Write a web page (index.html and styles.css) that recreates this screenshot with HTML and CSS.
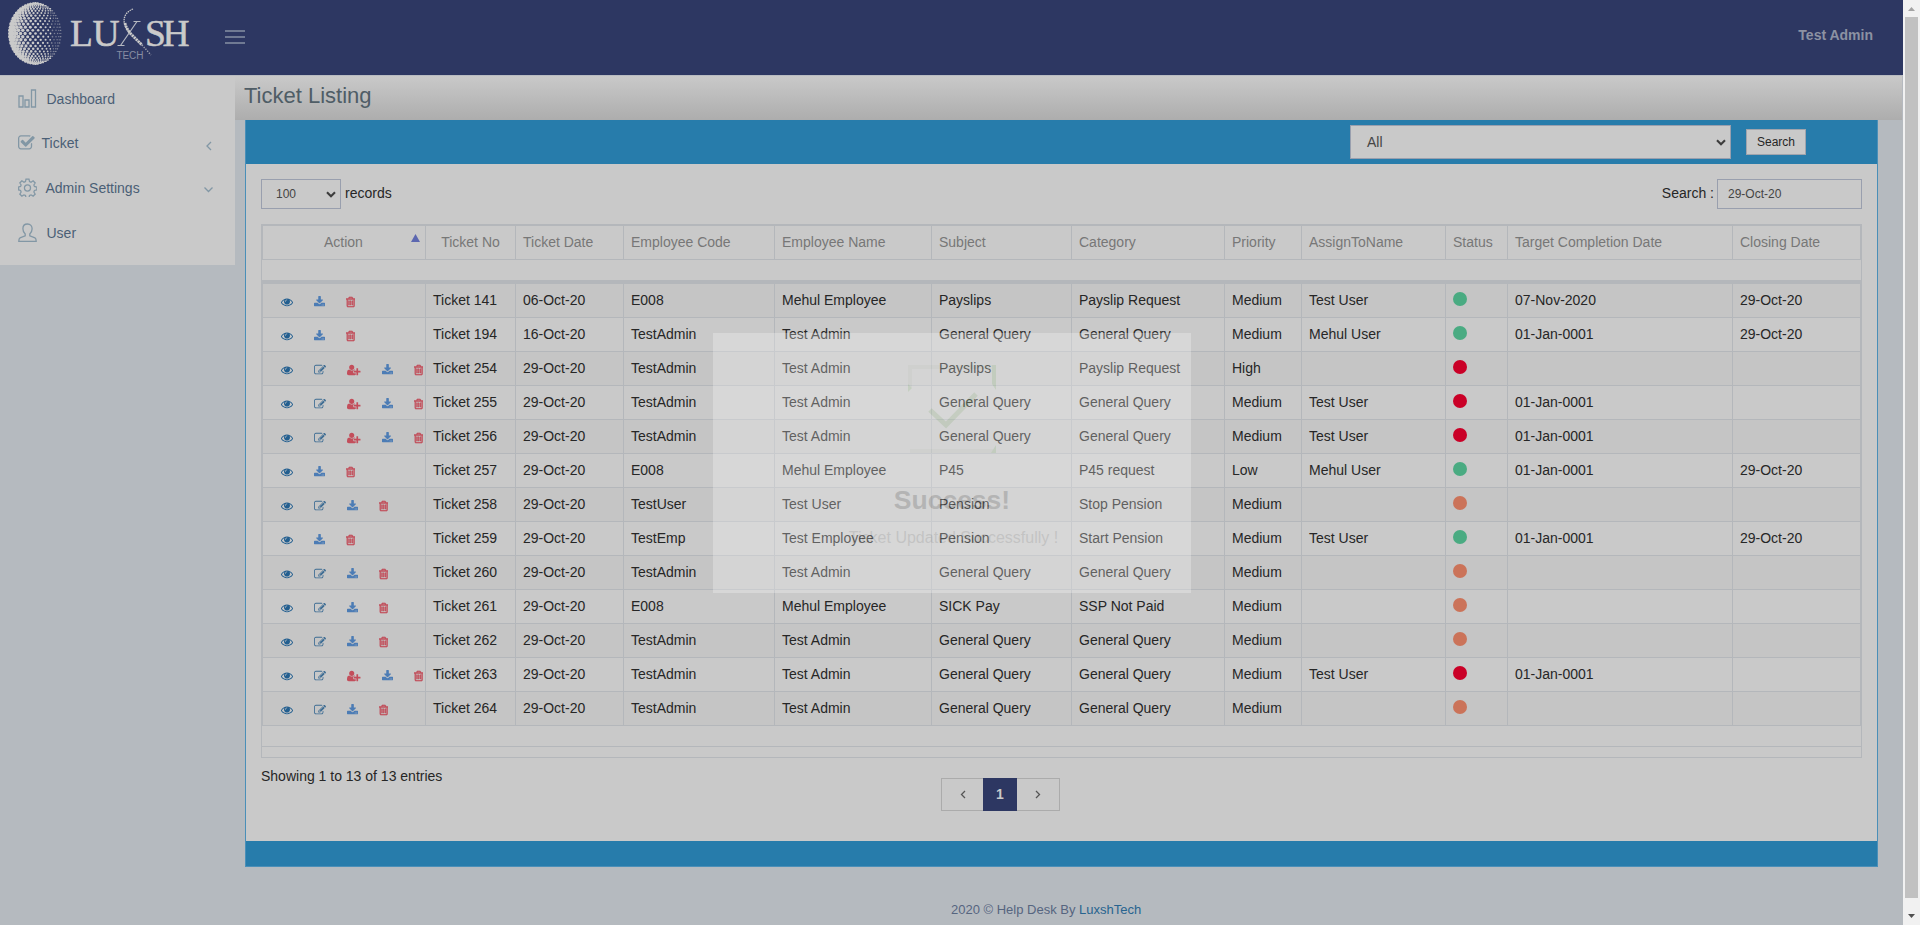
FILE: index.html
```html
<!DOCTYPE html>
<html lang="en">
<head>
<meta charset="utf-8">
<title>Ticket Listing</title>
<link rel="stylesheet" href="styles.css">
</head>
<body>
<svg class="defs" width="0" height="0">
  <symbol id="eye" viewBox="0 0 1792 1792"><path d="M1664 960q-152-236-381-353 61 104 61 225 0 185-131.5 316.5t-316.5 131.5-316.5-131.5-131.5-316.5q0-121 61-225-229 117-381 353 133 205 333.5 326.5t434.5 121.5 434.5-121.5 333.5-326.5zm-720-384q0-20-14-34t-34-14q-125 0-214.5 89.5t-89.5 214.5q0 20 14 34t34 14 34-14 14-34q0-86 61-147t147-61q20 0 34-14t14-34zm848 384q0 34-20 69-140 230-376.5 368.5t-499.5 138.5-499.5-139-376.5-368q-20-35-20-69t20-69q140-229 376.5-368t499.5-139 499.5 139 376.5 368q20 35 20 69z"/></symbol>
  <symbol id="edit" viewBox="0 0 1792 1792"><path d="M888 1184l116-116-152-152-116 116v56h96v96h56zm440-720q-16-16-33 1l-350 350q-17 17-1 33t33-1l350-350q17-17 1-33zm80 594v190q0 119-84.5 203.5t-203.5 84.5h-832q-119 0-203.5-84.5t-84.5-203.5v-832q0-119 84.5-203.5t203.5-84.5h832q63 0 117 25 15 7 18 23 3 17-9 29l-49 49q-14 14-32 8-23-6-45-6h-832q-66 0-113 47t-47 113v832q0 66 47 113t113 47h832q66 0 113-47t47-113v-126q0-13 9-22l64-64q15-15 35-7t20 29zm-96-738l288 288-672 672h-288v-288zm444 132l-92 92-288-288 92-92q28-28 68-28t68 28l152 152q28 28 28 68t-28 68z"/></symbol>
  <symbol id="assign" viewBox="0 0 2048 1792"><path d="M704 896q-159 0-271.5-112.5t-112.5-271.5 112.5-271.5 271.5-112.5 271.5 112.5 112.5 271.5-112.5 271.5-271.5 112.5zm960 128h352q13 0 22.5 9.5t9.5 22.5v192q0 13-9.5 22.5t-22.5 9.5h-352v352q0 13-9.5 22.5t-22.5 9.5h-192q-13 0-22.5-9.5t-9.5-22.5v-352h-352q-13 0-22.5-9.5t-9.5-22.5v-192q0-13 9.5-22.5t22.5-9.5h352v-352q0-13 9.5-22.5t22.5-9.5h192q13 0 22.5 9.5t9.5 22.5v352zm-736 224q0 52 38 90t90 38h256v238q-68 50-171 50h-874q-121 0-194-69t-73-190q0-53 3.5-103.5t14-109 26.5-108.5 43-97.5 62-81 85.5-53.5 111.5-20q19 0 39 17 79 61 154.5 91.5t164.5 30.5 164.5-30.5 154.5-91.5q20-17 39-17 132 0 217 96h-223q-52 0-90 38t-38 90v192z"/></symbol>
  <symbol id="download" viewBox="64 0 1664 1792"><path d="M1344 1344q0-26-19-45t-45-19-45 19-19 45 19 45 45 19 45-19 19-45zm256 0q0-26-19-45t-45-19-45 19-19 45 19 45 45 19 45-19 19-45zm128-224v320q0 40-28 68t-68 28h-1472q-40 0-68-28t-28-68v-320q0-40 28-68t68-28h465l135 136q58 56 136 56t136-56l136-136h464q40 0 68 28t28 68zm-325-569q17 41-14 70l-448 448q-18 19-45 19t-45-19l-448-448q-31-29-14-70 17-39 59-39h256v-448q0-26 19-45t45-19h256q26 0 45 19t19 45v448h256q42 0 59 39z"/></symbol>
  <symbol id="trash" viewBox="192 0 1408 1792"><path d="M704 736v576q0 14-9 23t-23 9h-64q-14 0-23-9t-9-23v-576q0-14 9-23t23-9h64q14 0 23 9t9 23zm256 0v576q0 14-9 23t-23 9h-64q-14 0-23-9t-9-23v-576q0-14 9-23t23-9h64q14 0 23 9t9 23zm256 0v576q0 14-9 23t-23 9h-64q-14 0-23-9t-9-23v-576q0-14 9-23t23-9h64q14 0 23 9t9 23zm128 724v-948h-896v948q0 22 7 40.5t14.5 27 10.5 8.5h832q3 0 10.5-8.5t14.5-27 7-40.5zm-672-1076h448l-48-117q-7-9-17-11h-317q-10 2-17 11zm928 32v64q0 14-9 23t-23 9h-96v948q0 83-47 143.5t-113 60.5h-832q-66 0-113-58.5t-47-141.5v-952h-96q-14 0-23-9t-9-23v-64q0-14 9-23t23-9h309l70-167q15-37 54-63t79-26h320q40 0 79 26t54 63l70 167h309q14 0 23 9t9 23z"/></symbol>
  <symbol id="caret" viewBox="0 0 10 7"><path d="M1 1.2 5 5.2 9 1.2" fill="none" stroke="#3c3c3c" stroke-width="2.1"/></symbol>
</svg>

<div class="app">
  <div class="page">
    <header class="topbar">
      <svg class="logo" width="200" height="75" viewBox="0 0 200 75">
        <g id="globe"></g>
        <g class="wordmark">
          <text y="45.700" x="70 92.500">LU</text>
          <path class="thin" d="M137 21.500 120.500 45.500M133.500 21.500h7M117.500 45.500h7"/>
          <text y="45.700" x="145 162.500">SH</text>
        </g>
        <path class="swoosh-line" d="M133 9C123 13 122 22 127 29L130 33"/>
        <path class="swoosh" d="M125 23Q126 28 130 33L142 45"/>
        <path class="swoosh-tail" d="M142 45 151 55"/>
        <text class="tech" x="116.500" y="59" textLength="27">TECH</text>
      </svg>
      <div class="burger"><i></i><i></i><i></i></div>
      <div class="account">Test Admin</div>
    </header>

    <div class="body">
      <nav class="sidebar">
        <div class="item">
          <svg width="19" height="20" viewBox="0 0 19 20"><path d="M1 7h4v11H1zM7 11h4v7H7zM13.500 1h4v17h-4z"/></svg><span>Dashboard</span>
        </div>
        <div class="item tight">
          <svg class="solid" width="18" height="18" viewBox="64 0 1792 1792"><path d="M1472 930v318q0 119-84.500 203.500t-203.500 84.500h-832q-119 0-203.500-84.500t-84.500-203.500v-832q0-119 84.500-203.500t203.500-84.500h832q63 0 117 25 15 7 18 23 3 17-9 29l-49 49q-10 10-23 10-3 0-9-2-23-6-45-6h-832q-66 0-113 47t-47 113v832q0 66 47 113t113 47h832q66 0 113-47t47-113v-254q0-13 9-22l64-64q10-10 23-10 6 0 12 3 20 8 20 29zm231-489l-814 814q-24 24-57 24t-57-24l-430-430q-24-24-24-57t24-57l110-110q24-24 57-24t57 24l263 263 647-647q24-24 57-24t57 24l110 110q24 24 24 57t-24 57z"/></svg><span>Ticket</span>
          <svg class="arrow" width="8" height="10" viewBox="0 0 8 10"><path d="M6 1 2 5l4 4"/></svg>
        </div>
        <div class="item gear">
          <svg width="19" height="19" viewBox="0 0 20 20"><path d="M8.400 1.200h3.200l.5 2.500 1.600.7 2.200-1.400 2.200 2.200-1.400 2.200.6 1.500 2.500.6v3.100l-2.500.5-.6 1.600 1.400 2.200-2.200 2.200-2.200-1.400-1.600.6-.5 2.500H8.400l-.5-2.500-1.600-.6-2.200 1.400-2.200-2.200 1.400-2.200-.6-1.600L.7 12.600V9.500l2-.6.6-1.500-1.400-2.200L4.100 3l2.200 1.400 1.600-.7z"/><circle cx="10" cy="10.500" r="3.200"/></svg><span>Admin Settings</span>
          <svg class="arrow" width="11" height="8" viewBox="0 0 11 8"><path d="M1.500 1.500l4 4 4-4"/></svg>
        </div>
        <div class="item">
          <svg width="19" height="20" viewBox="0 0 19 20"><path d="M9.500 1c-3 0-4.600 2-4.600 4.700 0 2.400.9 4 2.300 5.200v1.900L2 14.900c-1 .5-1.200 1.200-1.200 3.400h17.400c0-2.200-.2-2.900-1.200-3.400l-5.200-2.100v-1.900c1.400-1.200 2.300-2.800 2.300-5.200C14.100 3 12.500 1 9.500 1z"/></svg><span>User</span>
        </div>
      </nav>

      <main class="main">
        <h1 class="title">Ticket Listing</h1>
        <section class="panel">
          <div class="panel-head">
            <div class="select wide"><span>All</span><svg width="10" height="7"><use href="#caret"/></svg></div>
            <div class="button">Search</div>
          </div>
          <div class="panel-body">
            <div class="controls">
              <div class="select small"><span>100</span><svg width="10" height="7"><use href="#caret"/></svg></div>
              <span class="records">records</span>
              <span class="search-label">Search :</span>
              <div class="input">29-Oct-20</div>
            </div>
            <table class="grid">
              <colgroup>
                <col class="c1"><col class="c2"><col class="c3"><col class="c4"><col class="c5"><col class="c6"><col class="c7"><col class="c8"><col class="c9"><col class="c10"><col class="c11"><col class="c12">
              </colgroup>
              <thead>
                <tr>
                  <th class="center"><div class="sorted">Action<svg width="9" height="8"><path d="M4.500 0 9 8H0z"/></svg></div></th>
                  <th class="center">Ticket No</th><th>Ticket Date</th><th>Employee Code</th><th>Employee Name</th><th>Subject</th><th>Category</th><th>Priority</th><th>AssignToName</th><th>Status</th><th>Target Completion Date</th><th>Closing Date</th>
                </tr>
                <tr class="filter"><td colspan="12"></td></tr>
              </thead>
              <tbody id="rows"></tbody>
              <tfoot>
                <tr class="gap"><td colspan="12"></td></tr>
                <tr class="end"><td colspan="12"></td></tr>
              </tfoot>
            </table>
            <div class="summary">
              <span>Showing 1 to 13 of 13 entries</span>
              <div class="pager">
                <div class="prev"><svg width="6" height="9" viewBox="0 0 6 9"><path d="M5 1 1.500 4.500 5 8"/></svg></div>
                <div class="current">1</div>
                <div class="next"><svg width="6" height="9" viewBox="0 0 6 9"><path d="M1 1l3.500 3.500L1 8"/></svg></div>
              </div>
            </div>
          </div>
          <div class="panel-foot"></div>
        </section>
        <footer class="footer">2020 © Help Desk By <a>LuxshTech</a></footer>
      </main>
    </div>
  </div>
  <div class="scrollbar">
    <svg width="17" height="17"><path d="M5 11h7L8.500 7z"/></svg>
    <div class="thumb"></div>
    <svg class="down" width="17" height="27"><path d="M5 16h7l-3.500 4z"/></svg>
  </div>
</div>

<div class="modal">
  <svg width="88" height="88" viewBox="0 0 88 88">
    <path d="M0 2h88M2 2v20M2 86h84" stroke="#eaf0e6" stroke-width="4"/>
    <path d="M84 0h4v25l-4-6zM0 19l4 4-4 4zM88 80v8h-5z" fill="#bce0ac"/>
    <path d="M22 45l16 15 30-31" fill="none" stroke="#bcd8ae" stroke-width="5"/>
  </svg>
  <h2>Success!</h2>
  <p>Ticket Updated Successfully !</p>
</div>
<script src="app.js"></script>
</body>
</html>
```

FILE: app.js
```js
const tickets = [
  ['vdt', '141', '06-Oct-20', 'E008', 'Mehul Employee', 'Payslips', 'Payslip Request', 'Medium', 'Test User', 'green', '07-Nov-2020', '29-Oct-20'],
  ['vdt', '194', '16-Oct-20', 'TestAdmin', 'Test Admin', 'General Query', 'General Query', 'Medium', 'Mehul User', 'green', '01-Jan-0001', '29-Oct-20'],
  ['veadt', '254', '29-Oct-20', 'TestAdmin', 'Test Admin', 'Payslips', 'Payslip Request', 'High', '', 'red', '', ''],
  ['veadt', '255', '29-Oct-20', 'TestAdmin', 'Test Admin', 'General Query', 'General Query', 'Medium', 'Test User', 'red', '01-Jan-0001', ''],
  ['veadt', '256', '29-Oct-20', 'TestAdmin', 'Test Admin', 'General Query', 'General Query', 'Medium', 'Test User', 'red', '01-Jan-0001', ''],
  ['vdt', '257', '29-Oct-20', 'E008', 'Mehul Employee', 'P45', 'P45 request', 'Low', 'Mehul User', 'green', '01-Jan-0001', '29-Oct-20'],
  ['vedt', '258', '29-Oct-20', 'TestUser', 'Test User', 'Pension', 'Stop Pension', 'Medium', '', 'orange', '', ''],
  ['vdt', '259', '29-Oct-20', 'TestEmp', 'Test Employee', 'Pension', 'Start Pension', 'Medium', 'Test User', 'green', '01-Jan-0001', '29-Oct-20'],
  ['vedt', '260', '29-Oct-20', 'TestAdmin', 'Test Admin', 'General Query', 'General Query', 'Medium', '', 'orange', '', ''],
  ['vedt', '261', '29-Oct-20', 'E008', 'Mehul Employee', 'SICK Pay', 'SSP Not Paid', 'Medium', '', 'orange', '', ''],
  ['vedt', '262', '29-Oct-20', 'TestAdmin', 'Test Admin', 'General Query', 'General Query', 'Medium', '', 'orange', '', ''],
  ['veadt', '263', '29-Oct-20', 'TestAdmin', 'Test Admin', 'General Query', 'General Query', 'Medium', 'Test User', 'red', '01-Jan-0001', ''],
  ['vedt', '264', '29-Oct-20', 'TestAdmin', 'Test Admin', 'General Query', 'General Query', 'Medium', '', 'orange', '', ''],
];

const icons = { v: ['eye', 12], e: ['edit', 12], a: ['assign', 13.7], d: ['download', 11.1], t: ['trash', 9.4] };

document.getElementById('rows').innerHTML = tickets.map(t => {
  const actions = [...t[0]].map(k => {
    const [name, w] = icons[k];
    return `<svg class="${name}" width="${w}" height="12"><use href="#${name}"/></svg>`;
  }).join('');
  const cells = t.slice(2).map((v, i) => i === 7 ? `<td><div class="dot ${v}"></div></td>` : `<td>${v}</td>`).join('');
  return `<tr><td><div class="actions">${actions}</div></td><td>Ticket ${t[1]}</td>${cells}</tr>`;
}).join('');

// Halftone globe: a diamond lattice of dots projected on a sphere, fading to the right.
let dots = '';
const n = 15;
for (let i = -n; i <= n; i++) {
  for (let j = -n; j <= n; j++) {
    if ((i + j) % 2) continue;
    const a = i / n * Math.PI / 2, b = j / n * Math.PI / 2;
    const x = Math.sin(a) * Math.cos(b), y = Math.sin(b);
    const r = Math.max(0.45, 1.6 - 0.75 * (x + 0.35)) * (0.45 + 0.55 * Math.cos(b));
    const o = x > 0.6 ? 0.5 : 1;
    dots += `<circle cx="${(35.5 + x * 25.5).toFixed(1)}" cy="${(33.5 + y * 30.5).toFixed(1)}" r="${r.toFixed(2)}" opacity="${o}"/>`;
  }
}
document.getElementById('globe').innerHTML = dots;
```

FILE: styles.css
```css
* { box-sizing: border-box; }
body { margin: 0; height: 925px; overflow: hidden; background: #b5babf; font: 14px/20px "Liberation Sans", Arial, sans-serif; color: #262626; }
.defs { position: absolute; }
svg { display: block; flex: none; }
.app { display: flex; height: 925px; }
.page { flex: 1; }

.topbar { display: flex; align-items: flex-start; height: 75px; background: #2d3762; }
.logo { fill: #cacaca; }
.wordmark { font: 37.500px "Liberation Serif", serif; stroke: #cacaca; stroke-width: .5; }
.wordmark .thin { fill: none; stroke: #b4b7c0; stroke-width: 1.200; }
.swoosh, .swoosh-line, .swoosh-tail { fill: none; stroke: #cacaca; }
.swoosh-line { stroke-width: 1.300; stroke-dasharray: 1.500 .8; }
.swoosh { stroke-width: 2.800; stroke-dasharray: 2.200 .6; }
.swoosh-tail { stroke-width: 1.500; stroke-dasharray: 1.300 1.300; opacity: .7; }
.tech { font: 10px "Liberation Sans", sans-serif; fill: #888ea3; }
.burger { display: grid; gap: 4px; margin: 30px 0 0 25px; }
.burger i { width: 20px; height: 2px; background: #707a93; }
.account { margin: 25px 30px 0 auto; font-weight: bold; color: #8c92a3; }

.body { display: flex; align-items: flex-start; border-top: 1px solid #b8bbc1; }
.sidebar { width: 235px; height: 189px; padding-top: 1px; background: #c9c9c9; color: #4b5f76; }
.item { display: flex; align-items: center; height: 44.700px; padding-left: 18px; gap: 9.500px; }
.item svg { fill: none; stroke: #8297a5; stroke-width: 1.300; }
.item .solid { fill: #8297a5; stroke: none; }
.item.tight { gap: 5.500px; padding-bottom: 3px; }
.item.gear { gap: 8.500px; padding-bottom: 2px; }
.item .arrow { margin: 4px 21px 0 auto; }
.item.tight .arrow { margin: 6px 22px 0 auto; }

.main { flex: 1; }
.title { margin: 0; height: 44px; padding: 6px 0 0 9px; font-size: 22px; line-height: 28px; font-weight: normal; color: #4f5d66; background: linear-gradient(#c9c9c9, #adadad); border-right: 1px solid #b5b9bf; }
.panel { width: 1633px; margin-left: 10px; border: solid #4a8fb8; border-width: 0 1px 1px; background: #c9c9c9; }
.panel-head { display: flex; align-items: flex-start; justify-content: flex-end; gap: 15px; height: 44px; padding: 5px 71px 0 0; background: #277cab; }
.select { display: flex; align-items: center; justify-content: space-between; border: 1px solid #999fae; color: #454545; }
.wide { width: 381px; height: 34px; padding: 0 4px 0 16px; background: #c9c9c9; }
.button { width: 60px; height: 26px; margin-top: 4px; border: 1px solid #a0a4ad; background: #c9c9c9; font-size: 12px; line-height: 24px; text-align: center; }
.panel-body { height: 677px; padding: 15px 15px 0; }
.controls { display: flex; align-items: center; height: 30px; margin-bottom: 15px; }
.small { width: 80px; height: 30px; padding: 0 4px 0 14px; font-size: 12px; }
.records { margin: -3px 0 0 4px; }
.search-label { margin: -3px 3px 0 auto; }
.input { width: 145px; height: 30px; padding-left: 10px; border: 1px solid #999fae; font-size: 12px; line-height: 28px; color: #454545; }

.grid { width: 1601px; table-layout: fixed; border-spacing: 0; border: 1px solid #b4b7bb; }
.c1 { width: 164px; } .c2 { width: 90px; } .c3 { width: 108px; } .c4 { width: 151px; }
.c5 { width: 157px; } .c6 { width: 140px; } .c7 { width: 153px; } .c8 { width: 77px; }
.c9 { width: 144px; } .c10 { width: 62px; } .c11 { width: 225px; } .c12 { width: 128px; }
.grid th, .grid td { padding: 0 0 0 7px; height: 34px; border: solid #b4b7bb; border-width: 0 1px 1px 0; text-align: left; white-space: nowrap; }
.grid th { height: 35px; padding-bottom: 2px; border-top-width: 1px; font-weight: normal; color: #777; }
.grid th.center { padding: 0 0 2px; text-align: center; }
.grid th:first-child, .grid tbody td:first-child { border-left-width: 1px; }
.grid tbody td { padding-bottom: 2px; }
.grid tbody tr:nth-child(odd) { background: #c5c5c5; }
.grid .filter td { height: 24px; border-width: 0 0 4px; }
.grid .gap td { height: 21px; border-width: 0 0 1px; }
.grid .end td { height: 10px; border: 0; }
.sorted { display: flex; align-items: center; padding-left: 61px; }
.sorted svg { margin: -7px 5px 0 auto; fill: #5c67b0; }
.actions { display: flex; gap: 21px; margin: 4px 0 0 11px; width: 150px; }
.eye { fill: #235f90; } .edit { fill: #3d6c93; } .download { fill: #4c7cb5; } .assign, .trash { fill: #c34e5b; }
.trash { stroke: #c34e5b; stroke-width: 75; }
.dot { width: 14px; height: 14px; margin-bottom: 2px; border-radius: 50%; }
.green { background: #4aab82; } .red { background: #ca0027; } .orange { background: #cb7359; }

.summary { display: grid; grid-template-columns: 680px auto; align-items: start; }
.summary > span { margin-top: 8px; }
.pager { display: flex; margin-top: 20px; width: 119px; height: 33px; }
.pager div { display: flex; align-items: center; justify-content: center; border: 1px solid #ababab; }
.pager svg { fill: none; stroke: #555; stroke-width: 1.300; }
.pager .prev { flex: 42; border-right: 0; }
.pager .current { flex: 0 0 34px; padding-bottom: 1px; background: #2d3762; border-color: #2d3762; color: #c9c9c9; font-weight: bold; }
.pager .next { flex: 43; border-left: 0; }
.panel-foot { height: 25px; background: #277cab; }
.footer { margin-top: 33px; padding-left: 716px; font-size: 13px; color: #56657f; }
.footer a { color: #28648f; }

.scrollbar { display: flex; flex-direction: column; width: 17px; background: #f1f1f1; }
.scrollbar svg { fill: #a3a3a3; }
.scrollbar .down { fill: #505050; }
.thumb { flex: 1; margin: 0 2px; background: #c1c1c1; }

.modal { position: absolute; left: 713px; top: 333px; width: 478px; height: 260px; padding-top: 32px; background: #fff; opacity: .27; text-align: center; }
.modal svg { margin-left: 195px; }
.modal h2 { margin: 31px 0 0; font-size: 26.500px; line-height: 32px; color: #8a8a8a; }
.modal p { margin: 11px 0 0; font-size: 16px; line-height: 22px; color: #b4b4b4; padding-left: 3px; }
```
